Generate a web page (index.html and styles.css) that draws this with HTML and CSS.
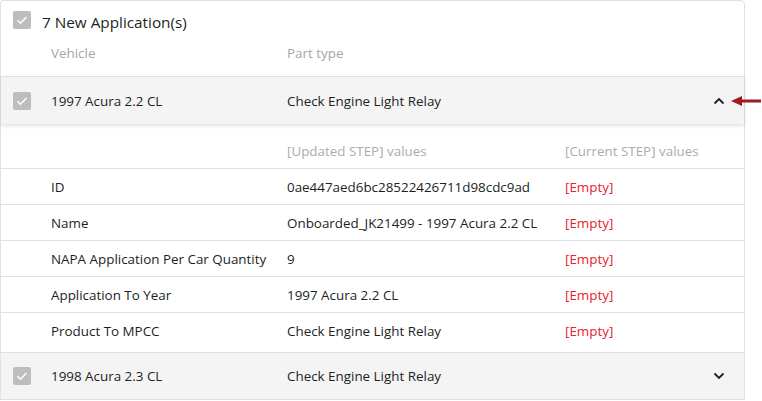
FILE: index.html
```html
<!DOCTYPE html>
<html>
<head>
<meta charset="utf-8">
<link rel="stylesheet" href="styles.css">
</head>
<body>
<div class="card">
  <div class="title-row">
    <span class="cb"><svg viewBox="0 0 18 18" width="18" height="18"><path d="M4.5 9.2l3 3 6-6.2" fill="none" stroke="#fff" stroke-width="1.6"/></svg></span>
    <span class="title">7 New Application(s)</span>
  </div>
  <div class="cols">
    <span class="c1">Vehicle</span>
    <span class="c2">Part type</span>
  </div>

  <div class="app open">
    <span class="cb"><svg viewBox="0 0 18 18" width="18" height="18"><path d="M4.5 9.2l3 3 6-6.2" fill="none" stroke="#fff" stroke-width="1.6"/></svg></span>
    <span class="c1">1997 Acura 2.2 CL</span>
    <span class="c2">Check Engine Light Relay</span>
    <span class="chev"><svg viewBox="0 0 12 8" width="12" height="8"><path d="M1.5 6.5L6 2l4.5 4.5" fill="none" stroke="#1f1f1f" stroke-width="1.8"/></svg></span>
  </div>

  <div class="details">
    <div class="drow dhead">
      <span></span>
      <span class="muted">[Updated STEP] values</span>
      <span class="muted">[Current STEP] values</span>
    </div>
    <div class="drow">
      <span>ID</span>
      <span>0ae447aed6bc28522426711d98cdc9ad</span>
      <span class="empty">[Empty]</span>
    </div>
    <div class="drow">
      <span>Name</span>
      <span>Onboarded_JK21499 - 1997 Acura 2.2 CL</span>
      <span class="empty">[Empty]</span>
    </div>
    <div class="drow">
      <span>NAPA Application Per Car Quantity</span>
      <span>9</span>
      <span class="empty">[Empty]</span>
    </div>
    <div class="drow">
      <span>Application To Year</span>
      <span>1997 Acura 2.2 CL</span>
      <span class="empty">[Empty]</span>
    </div>
    <div class="drow last">
      <span>Product To MPCC</span>
      <span>Check Engine Light Relay</span>
      <span class="empty">[Empty]</span>
    </div>
  </div>

  <div class="app">
    <span class="cb"><svg viewBox="0 0 18 18" width="18" height="18"><path d="M4.5 9.2l3 3 6-6.2" fill="none" stroke="#fff" stroke-width="1.6"/></svg></span>
    <span class="c1">1998 Acura 2.3 CL</span>
    <span class="c2">Check Engine Light Relay</span>
    <span class="chev"><svg viewBox="0 0 12 8" width="12" height="8"><path d="M1.5 1.5L6 6l4.5-4.5" fill="none" stroke="#1f1f1f" stroke-width="1.8"/></svg></span>
  </div>
</div>
<svg class="arrow" viewBox="0 0 30 10" width="30" height="10"><path d="M0 5L11 0V3.5H30V6.5H11V10Z" fill="#9e1b22"/></svg>
</body>
</html>
```

FILE: styles.css
```css
html, body {
  margin: 0;
  padding: 0;
  background: #fff;
}
body {
  font-family: "Open Sans", "Noto Sans", sans-serif;
  font-size: 13.4px;
  color: #201f1e;
  width: 762px;
  height: 401px;
  overflow: hidden;
}
.card {
  width: 745px;
  box-sizing: border-box;
  border: 1px solid #e1e1e1;
  border-bottom: none;
  border-radius: 4px 5px 0 0;
}
.cb {
  width: 18px;
  height: 18px;
  background: #bdbdbd;
  border-radius: 2px;
  display: block;
}
.cb svg { display: block; }
.title-row {
  display: flex;
  align-items: center;
  height: 39px;
  padding-left: 12px;
  box-sizing: border-box;
  padding-bottom: 1px;
}
.title {
  margin-left: 11px;
  font-size: 15.3px;
  color: #201f1e;
  margin-top: 3px;
}
.cols {
  display: grid;
  grid-template-columns: 50px 236px 1fr;
  height: 36px;
  align-items: center;
  color: #a6a6a6;
  padding-bottom: 11px;
  box-sizing: border-box;
}
.cols .c1 { grid-column: 2; }
.cols .c2 { grid-column: 3; }
.app {
  display: grid;
  align-items: center;
  height: 48px;
  box-sizing: border-box;
  background: #f4f4f4;
  border-top: 1px solid #e0e0e0;
  padding-left: 12px;
  grid-template-columns: 38px 236px 1fr 31px;
}
.app.open {
  box-shadow: 0 2px 4px rgba(0,0,0,0.12);
  position: relative;
}
.app:last-child {
  border-bottom: 1px solid #e0e0e0;
}
.chev { display: flex; justify-content: flex-start; }
.chev svg { display: block; }
.details {
  padding-bottom: 4px;
}
.drow {
  display: grid;
  grid-template-columns: 50px 236px 278px 1fr;
  height: 36px;
  align-items: center;
  border-top: 1px solid #e1e1e1;
  box-sizing: border-box;
}
.drow > span:first-child { grid-column: 2; }
.drow.dhead {
  border-top: none;
  height: 44px;
  padding-top: 10px;
}
.muted { color: #b0aaa5; }
.empty { color: #e3242b; }
.arrow {
  position: absolute;
  left: 731px;
  top: 96px;
}
```
